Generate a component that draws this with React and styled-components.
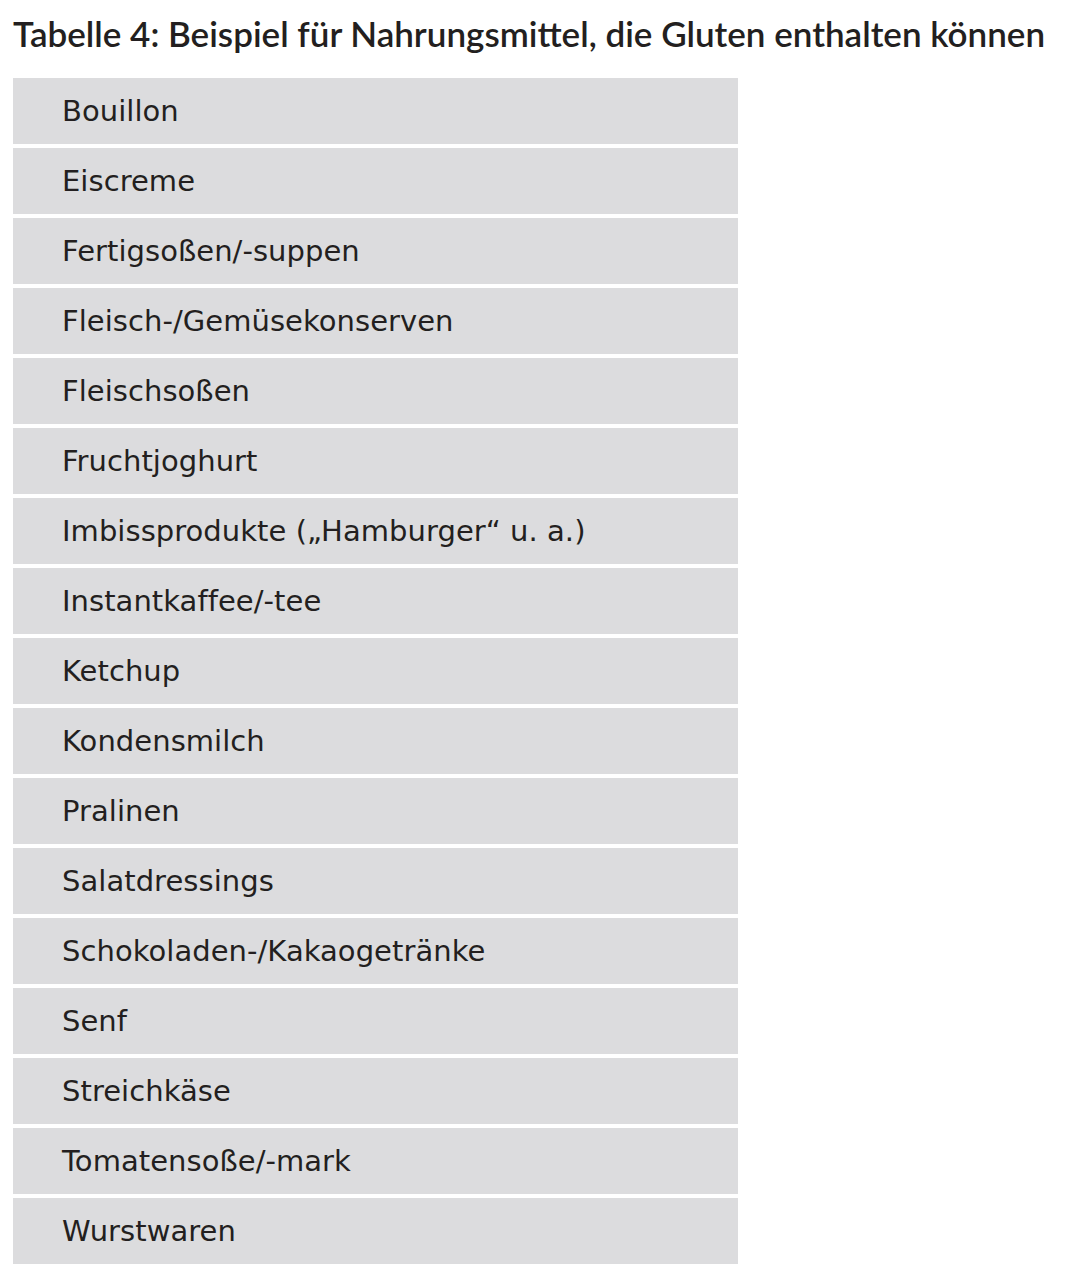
import React from 'react';
import styled, { createGlobalStyle } from 'styled-components';

const items = [
  'Bouillon',
  'Eiscreme',
  'Fertigsoßen/-suppen',
  'Fleisch-/Gemüsekonserven',
  'Fleischsoßen',
  'Fruchtjoghurt',
  'Imbissprodukte („Hamburger“ u. a.)',
  'Instantkaffee/-tee',
  'Ketchup',
  'Kondensmilch',
  'Pralinen',
  'Salatdressings',
  'Schokoladen-/Kakaogetränke',
  'Senf',
  'Streichkäse',
  'Tomatensoße/-mark',
  'Wurstwaren',
];

const GlobalStyle = createGlobalStyle`
  body {
    margin: 0;
    background: #ffffff;
  }
`;

const Page = styled.div`
  padding: 11px 0 0 13px;
`;

const Title = styled.h1`
  margin: 0 0 23px;
  font-family: 'Lato', 'Liberation Sans', sans-serif;
  font-weight: 600;
  font-size: 35px;
  line-height: 44px;
  letter-spacing: 0;
  color: #231f20;
  white-space: nowrap;
`;

const Table = styled.div`
  display: flex;
  flex-direction: column;
  gap: 4px;
  width: 725px;
`;

const Row = styled.div`
  display: flex;
  align-items: center;
  height: 66px;
  padding-left: 49px;
  background: #dcdcde;
  font-family: 'DejaVu Sans', 'Liberation Sans', sans-serif;
  font-size: 29px;
  color: #231f20;
  letter-spacing: 0.05px;
`;

export default function App() {
  return (
    <Page>
      <GlobalStyle />
      <Title>Tabelle 4: Beispiel für Nahrungsmittel, die Gluten enthalten können</Title>
      <Table>
        {items.map(item => (
          <Row key={item}>{item}</Row>
        ))}
      </Table>
    </Page>
  );
}
